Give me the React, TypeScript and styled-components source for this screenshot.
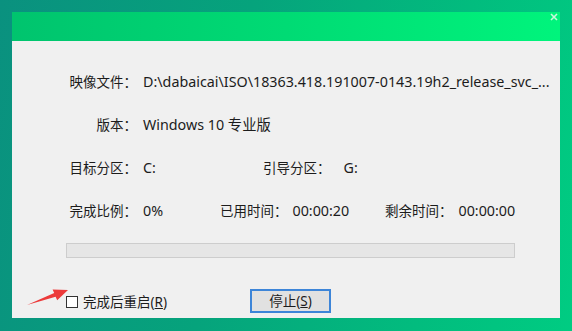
import React from "react";
import styled, {createGlobalStyle} from "styled-components";

const GlobalStyle = createGlobalStyle`
  html, body {
    margin: 0;
    padding: 0;
  }
  body {
    font-family: "Noto Sans", "Noto Sans CJK SC", sans-serif;
    color: #1c1c1c;
  }
`;

const Page = styled.div`
  width: 572px;
  height: 331px;
  box-sizing: border-box;
  padding: 12px 12px 0 12px;
  position: relative;
  overflow: hidden;
  background: linear-gradient(100deg, #0a917f 0%, #06a37c 40%, #02bc7e 75%, #00cc82 100%);
`;

const Window = styled.div`
  width: 548px;
  height: 306px;
  display: flex;
  flex-direction: column;
  background-color: #f0f0f0;
  position: relative;
`;

const TitleBar = styled.div`
  height: 29px;
  flex-shrink: 0;
  position: relative;
  background: linear-gradient(90deg, #00c46e 0%, #00db74 50%, #00f47c 100%);
`;

const CloseMark = styled.svg`
  position: absolute;
  right: 2px;
  top: 1px;
`;

const Content = styled.div`
  display: flex;
  flex-direction: column;
  padding: 31px 0 0 54px;
  font-size: 13.5px;
  line-height: 20px;
`;

const InfoRows = styled.div`
  display: flex;
  flex-direction: column;
  gap: 23px;
`;

const Row = styled.div`
  display: flex;
  height: 20px;
  white-space: nowrap;
`;

interface FieldProps {
    $w?: number;
}

const Field = styled.div<FieldProps>`
  display: flex;
  width: ${p => (p.$w ? `${p.$w}px` : "auto")};
  flex-shrink: 0;
`;

interface LabelProps {
    $w?: number;
}

const Label = styled.span<LabelProps>`
  display: inline-block;
  width: ${p => (p.$w ? `${p.$w}px` : "auto")};
  text-align: right;
`;

interface ValueProps {
    $gap?: number;
}

const Value = styled.span<ValueProps>`
  margin-left: ${p => p.$gap ?? 6}px;
  font-size: 14.3px;
`;

const Progress = styled.div`
  margin-top: 22px;
  width: 447px;
  height: 13px;
  border: 1px solid #cdcdcd;
  background-color: #e6e6e6;
`;

const BottomRow = styled.div`
  margin-top: 31px;
  display: flex;
  align-items: center;
  height: 24px;
`;

const CheckArea = styled.label`
  width: 184px;
  display: flex;
  align-items: center;
  padding-top: 2px;
`;

const CheckBox = styled.span`
  width: 10px;
  height: 10px;
  border: 1px solid #333;
  background-color: #fff;
`;

const CheckText = styled.span`
  margin-left: 5px;
`;

const StopButton = styled.button`
  width: 81px;
  height: 24px;
  box-sizing: border-box;
  border: 2px solid #3d85d8;
  background-color: #e1e1e1;
  font-family: inherit;
  font-size: 13.5px;
  line-height: 18px;
  color: #1c1c1c;
  padding: 0;
`;

const Arrow = styled.svg`
  position: absolute;
  left: 20px;
  top: 284px;
`;

export default function App() {
    return (
        <Page>
            <GlobalStyle/>
            <Window>
                <TitleBar>
                    <CloseMark width="8" height="8" viewBox="0 0 8 8">
                        <path d="M1 1 L7 7 M7 1 L1 7" stroke="#c9f7dc" strokeWidth="1.6"/>
                    </CloseMark>
                </TitleBar>
                <Content>
                    <InfoRows>
                        <Row>
                            <Field>
                                <Label $w={71}>映像文件：</Label>
                                <Value>D:\dabaicai\ISO\18363.418.191007-0143.19h2_release_svc_...</Value>
                            </Field>
                        </Row>
                        <Row>
                            <Field>
                                <Label $w={71}>版本：</Label>
                                <Value>Windows 10 专业版</Value>
                            </Field>
                        </Row>
                        <Row>
                            <Field $w={197}>
                                <Label $w={71}>目标分区：</Label>
                                <Value>C:</Value>
                            </Field>
                            <Field>
                                <Label>引导分区：</Label>
                                <Value $gap={13}>G:</Value>
                            </Field>
                        </Row>
                        <Row>
                            <Field $w={154}>
                                <Label $w={71}>完成比例：</Label>
                                <Value>0%</Value>
                            </Field>
                            <Field $w={165}>
                                <Label>已用时间：</Label>
                                <Value $gap={5}>00:00:20</Value>
                            </Field>
                            <Field>
                                <Label>剩余时间：</Label>
                                <Value>00:00:00</Value>
                            </Field>
                        </Row>
                    </InfoRows>
                    <Progress/>
                    <BottomRow>
                        <CheckArea>
                            <CheckBox/>
                            <CheckText>完成后重启(<u>R</u>)</CheckText>
                        </CheckArea>
                        <StopButton>停止(<u>S</u>)</StopButton>
                    </BottomRow>
                </Content>
            </Window>
            <Arrow width="56" height="24" viewBox="20 284 56 24">
                <polygon
                    points="27,305 54.2,292.9 52.6,289.4 68,290 57.2,300.2 55.6,296.7"
                    fill="#ec3a3a"
                />
            </Arrow>
        </Page>
    );
}
